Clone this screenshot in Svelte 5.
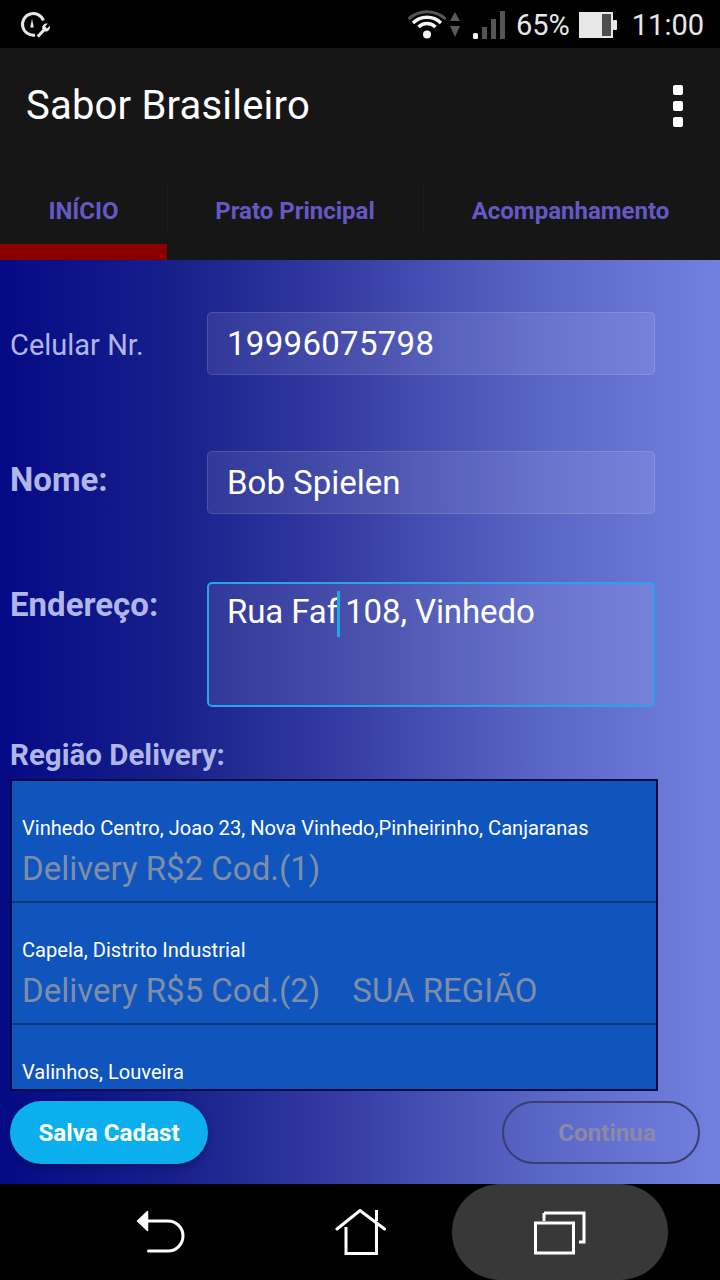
<script lang="ts">
	const tabs = [
		{ label: 'INÍCIO', active: true },
		{ label: 'Prato Principal', active: false },
		{ label: 'Acompanhamento', active: false }
	];

	const regions = [
		{ places: 'Vinhedo Centro, Joao 23, Nova Vinhedo,Pinheirinho, Canjaranas', price: 'Delivery R$2 Cod.(1)', mine: false },
		{ places: 'Capela, Distrito Industrial', price: 'Delivery R$5 Cod.(2)', mine: true },
		{ places: 'Valinhos, Louveira', price: '', mine: false }
	];
</script>

<div class="screen">
	<div class="status">
		<svg class="speedo" width="30" height="28" viewBox="0 0 30 28">
			<path d="M15 24 A10.8 10.8 0 1 1 23.4 9.5" fill="none" stroke="#e6e6e6" stroke-width="3" />
			<path d="M12 7.5 L13.8 16.5 L10.2 16.5 Z" fill="#e6e6e6" />
			<path d="M16.5 24.5 L22.5 18.5 A4.4 4.4 0 0 1 27.8 12.6 L25.2 15.6 L27 17.4 L29.8 15 A4.4 4.4 0 0 1 24.6 20.5 L19 26.5 Z" fill="#e6e6e6" />
		</svg>
		<div class="status-right">
			<svg width="40" height="34" viewBox="0 0 40 34">
				<path d="M1.5 13 A27 27 0 0 1 38.5 13" fill="none" stroke="#555" stroke-width="3" transform="translate(0 -1)" />
				<path d="M6 17 A20 20 0 0 1 34 17" fill="none" stroke="#f2f2f2" stroke-width="3.4" transform="translate(0 -1)" />
				<path d="M11.5 21 A12 12 0 0 1 28.5 21" fill="none" stroke="#f2f2f2" stroke-width="3.4" transform="translate(0 -1)" />
				<circle cx="20" cy="27.5" r="4" fill="#f2f2f2" />
			</svg>
			<svg class="updown" width="12" height="26" viewBox="0 0 12 26">
				<path d="M6 0 L11 9 L1 9 Z M1 14 L11 14 L6 25 Z" fill="#5a5a5a" />
			</svg>
			<svg class="signal" width="33" height="30" viewBox="0 0 33 30">
				<rect x="1" y="23" width="5" height="6" rx="1.5" fill="#f2f2f2" />
				<rect x="10" y="17" width="5" height="12" fill="#555" />
				<rect x="19" y="9" width="5" height="20" fill="#555" />
				<rect x="28" y="1" width="5" height="28" fill="#555" />
			</svg>
			<span class="pct">65%</span>
			<svg class="battery" width="38" height="26" viewBox="0 0 38 26">
				<rect x="0" y="0" width="34" height="26" fill="#e8e8e8" />
				<rect x="23" y="2" width="9" height="22" fill="#4d4d4d" />
				<rect x="34" y="8" width="4" height="10" rx="1" fill="#e8e8e8" />
			</svg>
			<span class="clock">11:00</span>
		</div>
	</div>

	<header class="appbar">
		<h1>Sabor Brasileiro</h1>
		<div class="menu"><i></i><i></i><i></i></div>
	</header>

	<nav class="tabs">
		{#each tabs as tab}
			<div class="tab" class:active={tab.active}><span>{tab.label}</span></div>
		{/each}
	</nav>

	<main class="content">
		<div class="form">
			<div class="row phone">
				<span class="label thin">Celular Nr.</span>
				<div class="field">19996075798</div>
			</div>
			<div class="row name">
				<span class="label">Nome:</span>
				<div class="field">Bob Spielen</div>
			</div>
			<div class="row address">
				<span class="label">Endereço:</span>
				<div class="field area">Rua Faf<span class="caret"></span> 108, Vinhedo</div>
			</div>
		</div>

		<div class="label region-title">Região Delivery:</div>
		<div class="region-list">
			{#each regions as region}
				<div class="region">
					<div class="places">{region.places}</div>
					{#if region.price}
						<div class="price">
							<span>{region.price}</span>
							{#if region.mine}<span class="mine">SUA REGIÃO</span>{/if}
						</div>
					{/if}
				</div>
			{/each}
		</div>

		<div class="actions">
			<button class="btn save">Salva Cadast</button>
			<button class="btn next" disabled>Continua</button>
		</div>
	</main>

	<footer class="navbar">
		<svg class="nav-back" width="50" height="46" viewBox="0 0 50 46">
			<path d="M2.5 11 L12.5 1.5 L12.5 20.5 Z" fill="#fff" stroke="#fff" stroke-width="1.5" stroke-linejoin="round" />
			<path d="M12 11 H33 A15 15 0 0 1 33 41 H13.5" fill="none" stroke="#fff" stroke-width="3" stroke-linecap="round" />
		</svg>
		<svg class="nav-home" width="52" height="48" viewBox="0 0 52 48">
			<path d="M2 20 L25 1.5 L49.5 20" fill="none" stroke="#fff" stroke-width="3" stroke-linecap="round" />
			<path d="M41.5 12 V1" fill="none" stroke="#fff" stroke-width="3" />
			<path d="M11 18 V44.5 H41.5 V14" fill="none" stroke="#fff" stroke-width="3" />
		</svg>
		<div class="nav-recent">
			<svg width="52" height="44" viewBox="0 0 52 44">
				<path d="M10 2 H50 V31 H45" fill="none" stroke="#fff" stroke-width="3" />
				<path d="M10 2 V10" fill="none" stroke="#fff" stroke-width="3" />
				<rect x="1.5" y="12" width="38" height="30" fill="none" stroke="#fff" stroke-width="3" />
			</svg>
		</div>
	</footer>
</div>

<style>
	:global(body) {
		margin: 0;
		background: #000;
	}

	.screen {
		width: 720px;
		height: 1280px;
		display: flex;
		flex-direction: column;
		font-family: Roboto, "Liberation Sans", sans-serif;
		overflow: hidden;
	}

	/* Status bar */
	.status {
		height: 48px;
		background: #000;
		display: flex;
		align-items: center;
		justify-content: space-between;
		padding: 0 16px 0 20px;
		flex: none;
	}

	.speedo {
		margin-top: 2px;
	}

	.status-right {
		display: flex;
		align-items: center;
		color: #e8e8e8;
	}

	.updown {
		margin-left: 2px;
		margin-top: 2px;
	}

	.signal {
		margin-left: 11px;
		margin-top: 2px;
	}

	.pct {
		font-size: 29px;
		margin-left: 11px;
		margin-top: 2px;
	}

	.battery {
		margin-left: 9px;
		margin-top: 2px;
	}

	.clock {
		font-size: 29px;
		margin-left: 15px;
		margin-top: 2px;
	}

	/* App bar */
	.appbar {
		height: 112px;
		box-sizing: border-box;
		background: #161616;
		display: flex;
		align-items: center;
		justify-content: space-between;
		padding: 3px 37px 0 26px;
		flex: none;
	}

	h1 {
		margin: 0;
		color: #fff;
		font-size: 40px;
		font-weight: 400;
		letter-spacing: 0.2px;
	}

	.menu {
		display: flex;
		flex-direction: column;
		gap: 6px;
	}

	.menu i {
		display: block;
		width: 10px;
		height: 10px;
		border-radius: 2px;
		background: #fff;
	}

	/* Tabs */
	.tabs {
		height: 100px;
		background: #161616;
		display: flex;
		flex: none;
	}

	.tab {
		position: relative;
		display: flex;
		justify-content: center;
		padding-top: 37px;
		box-sizing: border-box;
		color: #6459c4;
		font-size: 24px;
		font-weight: 700;
	}

	.tab:nth-child(1) {
		width: 167px;
	}

	.tab:nth-child(2) {
		width: 256px;
	}

	.tab:nth-child(3) {
		width: 295px;
	}

	.tab + .tab::before {
		content: '';
		position: absolute;
		left: 0;
		top: 24px;
		width: 1px;
		height: 48px;
		background: #1b1b1b;
	}

	.tab.active {
		border-bottom: 16px solid #8a0000;
	}

	/* Content */
	.content {
		flex: 1;
		background: linear-gradient(90deg, #050a85 0%, #18208c 25%, #3840a6 50%, #5a66c6 75%, #7280e0 100%);
		padding: 52px 20px 0 10px;
		display: flex;
		flex-direction: column;
		min-height: 0;
	}

	.form {
		display: flex;
		flex-direction: column;
	}

	.row {
		display: flex;
		align-items: flex-start;
	}

	.row.name {
		margin-top: 76px;
	}

	.row.address {
		margin-top: 68px;
	}

	.label {
		width: 197px;
		flex: none;
		color: #b0b6e6;
		font-size: 33px;
		font-weight: 700;
		line-height: 39px;
	}

	.label.thin {
		font-size: 29px;
		font-weight: 400;
		padding-top: 14px;
	}

	.name .label {
		padding-top: 9px;
	}

	.address .label {
		padding-top: 3px;
	}

	.field {
		width: 448px;
		height: 63px;
		box-sizing: border-box;
		padding-left: 19px;
		border: 1px solid rgba(255, 255, 255, 0.12);
		border-radius: 5px;
		background: rgba(255, 255, 255, 0.09);
		color: #fff;
		font-size: 33px;
		line-height: 61px;
	}

	.phone .field {
		letter-spacing: 0.3px;
	}

	.field.area {
		height: 125px;
		border: 2px solid #2aa3ee;
		padding-left: 18px;
		line-height: 56px;
		letter-spacing: -0.1px;
	}

	.caret {
		display: inline-block;
		width: 3px;
		height: 46px;
		margin-left: -1px;
		margin-right: -3px;
		vertical-align: middle;
		background: #1fa8e8;
	}

	.region-title {
		width: auto;
		font-size: 29.5px;
		margin-top: 31px;
		line-height: 34px;
	}

	.region-list {
		width: 648px;
		height: 312px;
		box-sizing: border-box;
		margin-top: 7px;
		border: 2px solid #050a40;
		background: #1055bd;
		overflow: hidden;
		flex: none;
	}

	.region {
		height: 122px;
		box-sizing: border-box;
		border-bottom: 2px solid #0b3a78;
		padding: 34px 0 0 10px;
	}

	.places {
		color: #fff;
		font-size: 20.1px;
		line-height: 26px;
	}

	.price {
		display: flex;
		gap: 32px;
		color: #7f8ea8;
		font-size: 33px;
		line-height: 44px;
		margin-top: 6px;
	}

	/* Buttons */
	.actions {
		display: flex;
		justify-content: space-between;
		margin-top: 10px;
	}

	.btn {
		width: 198px;
		height: 63px;
		border-radius: 32px;
		font-family: inherit;
		font-size: 24.2px;
		font-weight: 700;
		padding: 0;
	}

	.save {
		background: #0bafee;
		border: none;
		color: #fff;
		box-shadow: 0 3px 6px rgba(0, 0, 40, 0.35);
	}

	.next {
		background: transparent;
		border: 2px solid #3b3f6e;
		color: #8a8aa8;
		padding-left: 12px;
	}

	/* Nav bar */
	.navbar {
		height: 96px;
		background: #000;
		flex: none;
		display: flex;
		align-items: center;
	}

	.nav-back {
		margin-left: 135px;
		margin-top: 2px;
	}

	.nav-home {
		margin-left: 150px;
		margin-top: 2px;
	}

	.nav-recent {
		margin-left: 65px;
		width: 216px;
		height: 96px;
		border-radius: 48px;
		background: #383838;
		display: flex;
		align-items: center;
		justify-content: center;
	}

	.nav-recent svg {
		margin-top: 2px;
	}
</style>
